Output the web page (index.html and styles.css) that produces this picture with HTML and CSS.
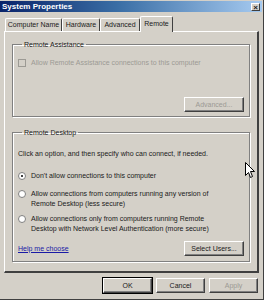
FILE: index.html
```html
<!DOCTYPE html>
<html lang="en">
<head>
<meta charset="UTF-8" />
<title>System Properties</title>
<link rel="stylesheet" href="styles.css">
</head>
<body>
<div class="window">
    <div class="titlebar">
        <span class="title">System Properties</span>
        <span class="close">&#215;</span>
    </div>

    <div class="content">
        <div class="tabs">
            <div class="tab t1">Computer Name</div>
            <div class="tab t2">Hardware</div>
            <div class="tab t3">Advanced</div>
            <div class="tab t4 active">Remote</div>
        </div>

        <div class="panel">
            <fieldset class="group assist">
                <legend>Remote Assistance</legend>
                <div class="row disabled">
                    <span class="check"></span>
                    <span>Allow Remote Assistance connections to this computer</span>
                </div>
                <div class="btn-row">
                    <button class="btn wide disabled">Advanced...</button>
                </div>
            </fieldset>

            <fieldset class="group desktop">
                <legend>Remote Desktop</legend>
                <p class="intro">Click an option, and then specify who can connect, if needed.</p>
                <div class="row opt">
                    <span class="radio on"></span>
                    <span>Don't allow connections to this computer</span>
                </div>
                <div class="row opt">
                    <span class="radio"></span>
                    <span>Allow connections from computers running any version of<br>Remote Desktop (less secure)</span>
                </div>
                <div class="row opt">
                    <span class="radio"></span>
                    <span>Allow connections only from computers running Remote<br>Desktop with Network Level Authentication (more secure)</span>
                </div>
                <div class="foot">
                    <a class="help" href="#">Help me choose</a>
                    <button class="btn wide">Select Users...</button>
                </div>
            </fieldset>
        </div>

        <div class="buttons">
            <button class="btn default">OK</button>
            <button class="btn">Cancel</button>
            <button class="btn disabled">Apply</button>
        </div>
    </div>

    <svg class="cursor" width="11" height="17" viewBox="0 0 11 17">
        <path d="M0.5 0.5 L0.5 13.5 L3.5 10.5 L5.5 15.5 L7.5 14.5 L5.5 9.5 L9.5 9.5 Z" fill="#fff" stroke="#000" stroke-width="1"/>
    </svg>
</div>
</body>
</html>
```

FILE: styles.css
```css
body {
margin: 0;
background: #d4d0c8;
font-family: 'Liberation Sans', Arial, sans-serif;
font-size: 7px;
color: #1a1a1a;
}

.window {
position: relative;
width: 264px;
height: 300px;
box-sizing: border-box;
background: #d4d0c8;
border-right: 1px solid #404040;
border-bottom: 1px solid #404040;
overflow: hidden;
}

.titlebar {
height: 11px;
margin: 1px 1px 0 0;
display: flex;
align-items: center;
justify-content: space-between;
padding: 0 2px 0 2px;
background: linear-gradient(to right, #0a246a, #3a6ea5 45%, #a6caf0);
}

.title {
color: #fff;
font-weight: bold;
font-size: 8px;
}

.close {
width: 9px;
height: 8px;
line-height: 8px;
text-align: center;
font-size: 8px;
font-weight: bold;
background: #d4d0c8;
border-top: 1px solid #fff;
border-left: 1px solid #fff;
border-right: 1px solid #404040;
border-bottom: 1px solid #404040;
box-sizing: border-box;
}

.content {
padding: 3px 4px 0 4px;
}

.tabs {
display: flex;
align-items: flex-end;
height: 17px;
padding-left: 1px;
position: relative;
z-index: 2;
}

.tab {
height: 13px;
line-height: 12px;
text-align: center;
white-space: nowrap;
box-sizing: border-box;
border-top: 1px solid #fff;
border-left: 1px solid #fff;
border-right: 1px solid #404040;
border-radius: 2px 2px 0 0;
margin-bottom: 1px;
}

.t1 { width: 57px; }
.t2 { width: 38px; }
.t3 { width: 40px; }
.t4 { width: 33px; }

.tab.active {
height: 16px;
margin-bottom: 0;
line-height: 14px;
background: #d4d0c8;
}

.panel {
width: 255px;
height: 242px;
box-sizing: border-box;
margin-top: -1px;
border-top: 1px solid #fff;
border-left: 1px solid #fff;
border-right: 2px solid #404040;
border-bottom: 2px solid #404040;
padding: 7px 7px 0 7px;
}

.group {
margin: 0;
padding: 0 5px 0 5px;
border: 1px solid #808080;
box-shadow: inset 1px 1px 0 #fff, 1px 1px 0 #fff;
box-sizing: border-box;
}

.group legend {
padding: 0 2px;
margin-left: 4px;
line-height: 11px;
}

.assist {
height: 78px;
}

.desktop {
height: 135px;
margin-top: 10px;
}

.row {
display: flex;
align-items: flex-start;
gap: 5px;
line-height: 10px;
}

.disabled {
color: #9c9a94;
}

.assist .row {
margin-top: 8px;
}

.check {
width: 8px;
height: 8px;
margin-top: 1px;
box-sizing: border-box;
border: 1px solid #9c9a94;
background: #d4d0c8;
}

.btn-row {
display: flex;
justify-content: flex-end;
margin-top: 29px;
}

.intro {
margin: 11px 0 12px 0;
line-height: 10px;
}

.opt {
margin-bottom: 8px;
}

.opt + .opt {
margin-bottom: 5px;
}

.radio {
width: 8px;
height: 8px;
margin-top: 1px;
flex-shrink: 0;
box-sizing: border-box;
border-radius: 50%;
border: 1px solid #808080;
background: #fff;
position: relative;
}

.radio.on::after {
content: '';
position: absolute;
left: 2px;
top: 2px;
width: 2px;
height: 2px;
border-radius: 50%;
background: #000;
}

.foot {
display: flex;
justify-content: space-between;
align-items: center;
margin-top: 7px;
}

.help {
color: #1a1aa6;
line-height: 10px;
}

.btn {
width: 49px;
height: 15px;
padding: 0;
font-family: inherit;
font-size: 7px;
color: #1a1a1a;
background: #d4d0c8;
border-top: 1px solid #fff;
border-left: 1px solid #fff;
border-right: 1px solid #404040;
border-bottom: 1px solid #404040;
box-shadow: inset -1px -1px 0 #808080;
}

.btn.wide {
width: 60px;
height: 15px;
}

.btn.disabled {
color: #9c9a94;
}

.btn.default {
outline: 1px solid #000;
}

.buttons {
display: flex;
justify-content: flex-end;
gap: 4px;
margin-top: 5px;
padding-right: 1px;
}

.cursor {
position: absolute;
left: 245px;
top: 162px;
}
```
